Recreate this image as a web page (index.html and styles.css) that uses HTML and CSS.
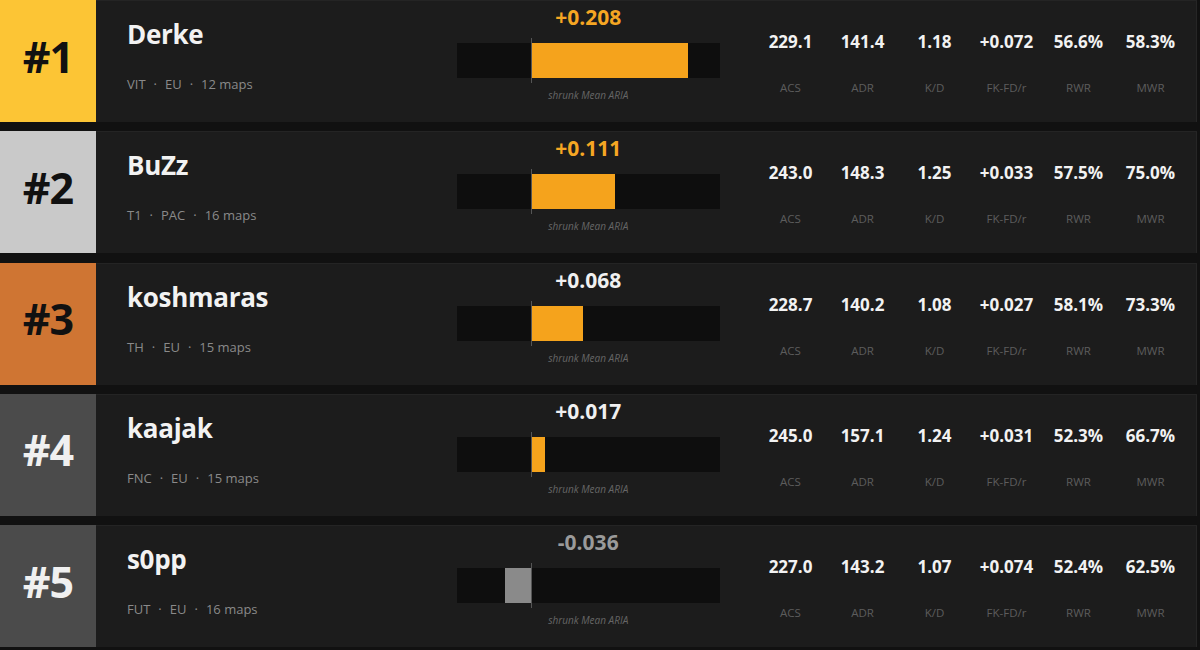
FILE: index.html
```html
<!DOCTYPE html>
<html>
<head>
<meta charset="utf-8">
<link rel="stylesheet" href="styles.css">
</head>
<body>
<div class="board">
  <div class="row">
    <div class="rank r1">#1</div>
    <div class="info"><div class="name">Derke</div><div class="meta">VIT<span class="sep">·</span>EU<span class="sep">·</span>12 maps</div></div>
    <div class="aria"><div class="val hi">+0.208</div><div class="track"><div class="fill pos" style="width:59.43%"></div><div class="zero"></div></div><div class="lbl">shrunk Mean ARIA</div></div>
    <div class="stats">
      <div class="stat"><b>229.1</b><span>ACS</span></div>
      <div class="stat"><b>141.4</b><span>ADR</span></div>
      <div class="stat"><b>1.18</b><span>K/D</span></div>
      <div class="stat"><b>+0.072</b><span>FK-FD/r</span></div>
      <div class="stat"><b>56.6%</b><span>RWR</span></div>
      <div class="stat"><b>58.3%</b><span>MWR</span></div>
    </div>
  </div>
  <div class="row">
    <div class="rank r2">#2</div>
    <div class="info"><div class="name">BuZz</div><div class="meta">T1<span class="sep">·</span>PAC<span class="sep">·</span>16 maps</div></div>
    <div class="aria"><div class="val hi">+0.111</div><div class="track"><div class="fill pos" style="width:31.71%"></div><div class="zero"></div></div><div class="lbl">shrunk Mean ARIA</div></div>
    <div class="stats">
      <div class="stat"><b>243.0</b><span>ACS</span></div>
      <div class="stat"><b>148.3</b><span>ADR</span></div>
      <div class="stat"><b>1.25</b><span>K/D</span></div>
      <div class="stat"><b>+0.033</b><span>FK-FD/r</span></div>
      <div class="stat"><b>57.5%</b><span>RWR</span></div>
      <div class="stat"><b>75.0%</b><span>MWR</span></div>
    </div>
  </div>
  <div class="row">
    <div class="rank r3">#3</div>
    <div class="info"><div class="name">koshmaras</div><div class="meta">TH<span class="sep">·</span>EU<span class="sep">·</span>15 maps</div></div>
    <div class="aria"><div class="val">+0.068</div><div class="track"><div class="fill pos" style="width:19.43%"></div><div class="zero"></div></div><div class="lbl">shrunk Mean ARIA</div></div>
    <div class="stats">
      <div class="stat"><b>228.7</b><span>ACS</span></div>
      <div class="stat"><b>140.2</b><span>ADR</span></div>
      <div class="stat"><b>1.08</b><span>K/D</span></div>
      <div class="stat"><b>+0.027</b><span>FK-FD/r</span></div>
      <div class="stat"><b>58.1%</b><span>RWR</span></div>
      <div class="stat"><b>73.3%</b><span>MWR</span></div>
    </div>
  </div>
  <div class="row">
    <div class="rank r4">#4</div>
    <div class="info"><div class="name">kaajak</div><div class="meta">FNC<span class="sep">·</span>EU<span class="sep">·</span>15 maps</div></div>
    <div class="aria"><div class="val">+0.017</div><div class="track"><div class="fill pos" style="width:4.86%"></div><div class="zero"></div></div><div class="lbl">shrunk Mean ARIA</div></div>
    <div class="stats">
      <div class="stat"><b>245.0</b><span>ACS</span></div>
      <div class="stat"><b>157.1</b><span>ADR</span></div>
      <div class="stat"><b>1.24</b><span>K/D</span></div>
      <div class="stat"><b>+0.031</b><span>FK-FD/r</span></div>
      <div class="stat"><b>52.3%</b><span>RWR</span></div>
      <div class="stat"><b>66.7%</b><span>MWR</span></div>
    </div>
  </div>
  <div class="row">
    <div class="rank r5">#5</div>
    <div class="info"><div class="name">s0pp</div><div class="meta">FUT<span class="sep">·</span>EU<span class="sep">·</span>16 maps</div></div>
    <div class="aria"><div class="val neg">-0.036</div><div class="track"><div class="fill negf" style="width:10.29%"></div><div class="zero"></div></div><div class="lbl">shrunk Mean ARIA</div></div>
    <div class="stats">
      <div class="stat"><b>227.0</b><span>ACS</span></div>
      <div class="stat"><b>143.2</b><span>ADR</span></div>
      <div class="stat"><b>1.07</b><span>K/D</span></div>
      <div class="stat"><b>+0.074</b><span>FK-FD/r</span></div>
      <div class="stat"><b>52.4%</b><span>RWR</span></div>
      <div class="stat"><b>62.5%</b><span>MWR</span></div>
    </div>
  </div>
</div>
</body>
</html>
```
FILE: styles.css
```css
html, body {
  margin: 0;
  padding: 0;
  background: #111111;
}
body {
  font-family: "Open Sans", "Noto Sans", sans-serif;
  color: #eeeeee;
}
.board {
  width: 1197px;
  display: flex;
  flex-direction: column;
  gap: 9.25px;
}
.row {
  display: flex;
  height: 122px;
  background: #1c1c1c;
  box-shadow: inset 0 1px 0 #242424, inset -1px 0 0 #262626;
}
.rank {
  width: 96px;
  flex: none;
  display: flex;
  align-items: center;
  justify-content: center;
  padding-bottom: 10px;
  box-sizing: border-box;
  font-size: 43px;
  font-weight: 700;
  letter-spacing: -1px;
  color: #111111;
}
.r1 { background: #fcc535; }
.r2 { background: #c9c9c9; }
.r3 { background: #cf7533; }
.r4, .r5 { background: #4b4b4b; color: #f0f0f0; }
.info {
  width: 330px;
  flex: none;
  padding-left: 31px;
  padding-top: 16px;
}
.name {
  font-size: 26px;
  font-weight: 700;
  line-height: 36px;
  color: #f2f2f2;
  letter-spacing: -0.3px;
}
.meta {
  margin-top: 23px;
  font-size: 13px;
  color: #8a8a8a;
  line-height: 18px;
}
.sep {
  margin: 0 8px;
}
.aria {
  width: 262.5px;
  flex: none;
  display: flex;
  flex-direction: column;
  align-items: center;
  padding-top: 3px;
}
.val {
  font-size: 21px;
  font-weight: 700;
  line-height: 28px;
  color: #f0f0f0;
}
.val.hi { color: #f5a623; }
.val.neg { color: #9a9a9a; }
.track {
  position: relative;
  width: 100%;
  height: 35px;
  margin-top: 12px;
  background: #0e0e0e;
}
.fill {
  position: absolute;
  top: 0;
  bottom: 0;
}
.fill.pos {
  left: 28.57%;
  background: #f5a31c;
}
.fill.negf {
  right: 71.43%;
  background: #8a8a8a;
}
.zero {
  position: absolute;
  left: 28.57%;
  top: -5px;
  bottom: -5px;
  width: 1px;
  margin-left: -1px;
  background: #555555;
}
.lbl {
  margin-top: 10px;
  font-size: 10px;
  font-style: italic;
  color: #666666;
  line-height: 14px;
}
.stats {
  display: flex;
  margin-left: 35px;
  padding-top: 30px;
}
.stat {
  width: 72px;
  display: flex;
  flex-direction: column;
  align-items: center;
}
.stat b {
  font-size: 17px;
  font-weight: 700;
  line-height: 24px;
  color: #f2f2f2;
}
.stat span {
  margin-top: 26px;
  font-size: 11.5px;
  color: #5c5c5c;
  line-height: 16px;
}
```
